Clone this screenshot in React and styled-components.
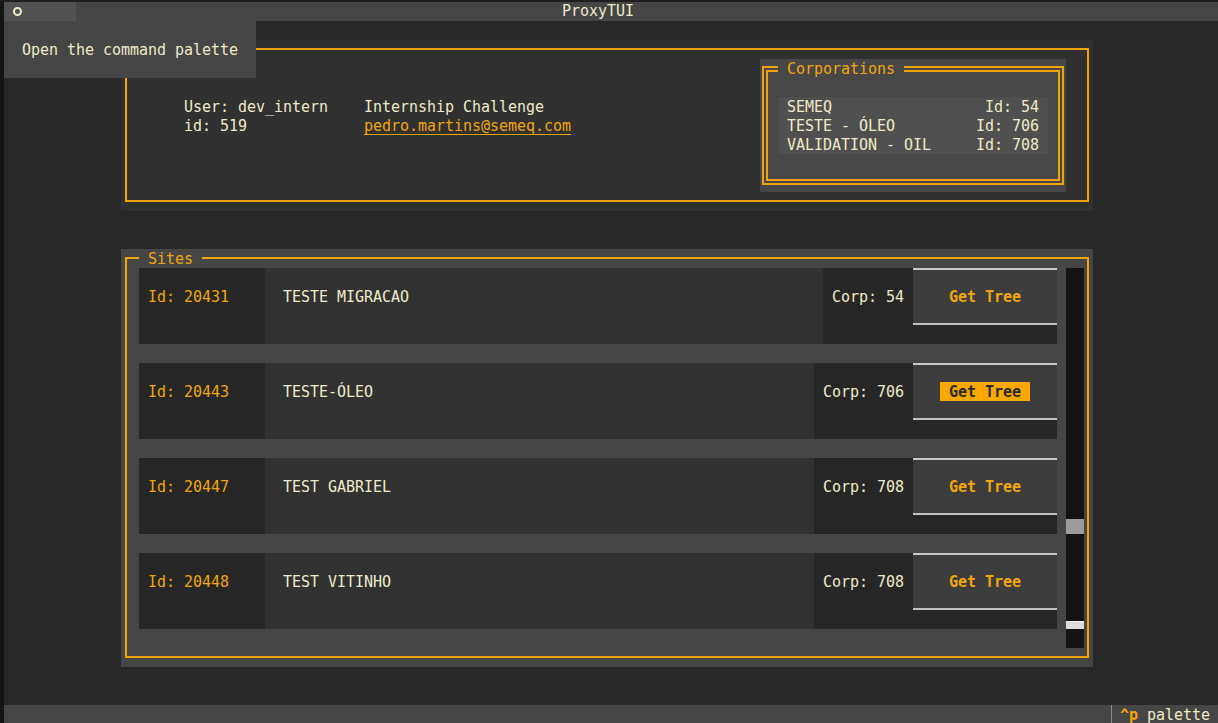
import React from "react";
import styled, { createGlobalStyle } from "styled-components";

const C = {
  fg: "#efebc9",
  orange: "#f2a60c",
  orangeLine: "#f0a30a",
  focusBg: "#f9a800",
  body: "#272727",
  bar: "#454545",
};

const GlobalStyle = createGlobalStyle`
  html, body { margin: 0; padding: 0; background: #1a1b1a; overflow: hidden; }
  #root { width: 1218px; height: 723px; }
  * { box-sizing: border-box; }
`;

const Root = styled.div`
  position: relative;
  width: 1218px;
  height: 723px;
  padding: 2px 0 0 4px;
  background: linear-gradient(to bottom, #1e1e1e 0 2px, #131514 2px);
  display: flex;
  flex-direction: column;
  font-family: "DejaVu Sans Mono", "Liberation Mono", monospace;
  font-size: 15px;
  letter-spacing: -0.03px;
  line-height: 20px;
  color: ${C.fg};
`;

const Header = styled.header`
  height: 19px;
  flex: none;
  display: flex;
  background: ${C.bar};
  line-height: 19px;
`;

const HeaderIcon = styled.div`
  width: 72px;
  background: #515151;
  display: flex;
  align-items: center;
  padding-left: 9px;
`;

const Ring = styled.span`
  width: 9px;
  height: 9px;
  border: 2px solid ${C.fg};
  border-radius: 50%;
`;

const HeaderTitle = styled.div`
  flex: 1;
  text-align: center;
`;

const HeaderSpacer = styled.div`
  width: 98px;
`;

const Main = styled.main`
  flex: 1;
  background: ${C.body};
  display: flex;
  flex-direction: column;
  align-items: flex-start;
  padding: 19px 0 0 117px;
`;

const Frame = styled.section`
  width: 972px;
  height: ${(p) => p.$h}px;
  margin-top: ${(p) => p.$mt || 0}px;
  padding: 8px 4px 9px 4px;
  background: ${(p) => p.$bg};
  flex: none;
`;

const FrameBorder = styled.div`
  position: relative;
  height: 100%;
  border: 2px solid ${C.orangeLine};
  display: flex;
  align-items: flex-start;
  gap: ${(p) => p.$gap || 0}px;
  padding: ${(p) => p.$pad || "0"};
`;

const FrameTitle = styled.div`
  position: absolute;
  left: ${(p) => p.$left}px;
  top: ${(p) => p.$top}px;
  height: 19px;
  padding: 0 9px;
  background: ${(p) => p.$bg};
  color: ${C.orange};
`;

const UserInfo = styled.div`
  margin: 47px 0 0 57px;
  display: grid;
  grid-template-columns: 180px auto;
  grid-auto-rows: 19px;
`;

const Email = styled.span`
  color: ${C.orange};
  text-decoration: underline;
  text-underline-offset: 3px;
  text-decoration-thickness: 1px;
`;

const CorpBox = styled.div`
  margin: 9px 21px 0 auto;
  width: 306px;
  height: 133px;
  padding: 7px 2px;
  background: #474747;
`;

const CorpBorder = styled.div`
  position: relative;
  height: 100%;
  border: 6px double ${C.orangeLine};
  padding: 25px 10px 0;
`;

const CorpList = styled.div`
  background: #4f4f4f;
`;

const CorpRow = styled.div`
  height: 19px;
  display: flex;
  justify-content: space-between;
  padding: 0 9px;
  white-space: pre;
`;

const SiteList = styled.div`
  flex: 1;
  display: flex;
  flex-direction: column;
  gap: 19px;
`;

const SiteRow = styled.div`
  height: 76px;
  display: flex;
  background: #262626;
`;

const IdCell = styled.div`
  width: 126px;
  padding: 19px 0 0 9px;
  color: ${C.orange};
`;

const NameCell = styled.div`
  flex: 1;
  background: #313131;
  padding: 19px 0 0 18px;
`;

const CorpCell = styled.div`
  padding: 19px 9px 0;
  white-space: pre;
`;

const TreeButton = styled.div`
  width: 144px;
  height: 57px;
  background: #3c3c3c;
  border-top: 2px solid #cacaca;
  border-bottom: 2px solid #c2c2c2;
  display: flex;
  align-items: center;
  justify-content: center;
  font-weight: bold;
  color: ${C.orange};
`;

const ButtonLabel = styled.span`
  height: 19px;
  line-height: 20px;
  padding: 0 9px;
  background: ${(p) => (p.$focused ? C.focusBg : "transparent")};
  color: ${(p) => (p.$focused ? "#2a2a2a" : C.orange)};
`;

const Scrollbar = styled.div`
  position: relative;
  width: 18px;
  height: 380px;
  flex: none;
  background: #131313;
`;

const ScrollMark = styled.div`
  position: absolute;
  left: 0;
  right: 0;
  top: ${(p) => p.$top}px;
  height: ${(p) => p.$h}px;
  background: ${(p) => p.$c};
  border-top: ${(p) => (p.$edge ? `1px solid ${p.$edge}` : "none")};
`;

const Footer = styled.footer`
  height: 18px;
  flex: none;
  overflow: hidden;
  background: ${C.bar};
  display: flex;
  justify-content: flex-end;
`;

const FooterKey = styled.div`
  border-left: 1px solid #7d8fa3;
  padding: 0 8px;
  white-space: pre;
`;

const KeyName = styled.span`
  color: ${C.orange};
  font-weight: bold;
`;

const Tooltip = styled.div`
  position: absolute;
  left: 4px;
  top: 21px;
  width: 252px;
  height: 57px;
  padding: 19px 18px 0;
  background: ${C.bar};
  white-space: pre;
`;

const corps = [
  ["SEMEQ", "Id: 54"],
  ["TESTE - ÓLEO", "Id: 706"],
  ["VALIDATION - OIL", "Id: 708"],
];

const sites = [
  { id: 20431, name: "TESTE MIGRACAO", corp: 54 },
  { id: 20443, name: "TESTE-ÓLEO", corp: 706, focused: true },
  { id: 20447, name: "TEST GABRIEL", corp: 708 },
  { id: 20448, name: "TEST VITINHO", corp: 708 },
];

export default function App() {
  return (
    <Root>
      <GlobalStyle />
      <Header>
        <HeaderIcon>
          <Ring />
        </HeaderIcon>
        <HeaderTitle>ProxyTUI</HeaderTitle>
        <HeaderSpacer />
      </Header>
      <Main>
        <Frame $h={171} $bg="#303030">
          <FrameBorder>
            <UserInfo>
              <span>User: dev_intern</span>
              <span>Internship Challenge</span>
              <span>id: 519</span>
              <Email>pedro.martins@semeq.com</Email>
            </UserInfo>
            <CorpBox>
              <CorpBorder>
                <FrameTitle $left={10} $top={-13} $bg="#474747">
                  Corporations
                </FrameTitle>
                <CorpList>
                  {corps.map(([n, id]) => (
                    <CorpRow key={n}>
                      <span>{n}</span>
                      <span>{id}</span>
                    </CorpRow>
                  ))}
                </CorpList>
              </CorpBorder>
            </CorpBox>
          </FrameBorder>
        </Frame>
        <Frame $h={418} $mt={38} $bg="#454545">
          <FrameBorder $pad="9px 3px 9px 12px" $gap={9}>
            <FrameTitle $left={12} $top={-10} $bg="#454545">
              Sites
            </FrameTitle>
            <SiteList>
              {sites.map((s) => (
                <SiteRow key={s.id}>
                  <IdCell>Id: {s.id}</IdCell>
                  <NameCell>{s.name}</NameCell>
                  <CorpCell>Corp: {s.corp}</CorpCell>
                  <TreeButton>
                    <ButtonLabel $focused={s.focused}>Get Tree</ButtonLabel>
                  </TreeButton>
                </SiteRow>
              ))}
            </SiteList>
            <Scrollbar>
              <ScrollMark $top={251} $h={15} $c="#9c9c9c" />
              <ScrollMark $top={353} $h={8} $c="#dcdcdc" $edge="#f0f0f0" />
            </Scrollbar>
          </FrameBorder>
        </Frame>
      </Main>
      <Footer>
        <FooterKey>
          <KeyName>^p</KeyName> palette
        </FooterKey>
      </Footer>
      <Tooltip>Open the command palette</Tooltip>
    </Root>
  );
}
